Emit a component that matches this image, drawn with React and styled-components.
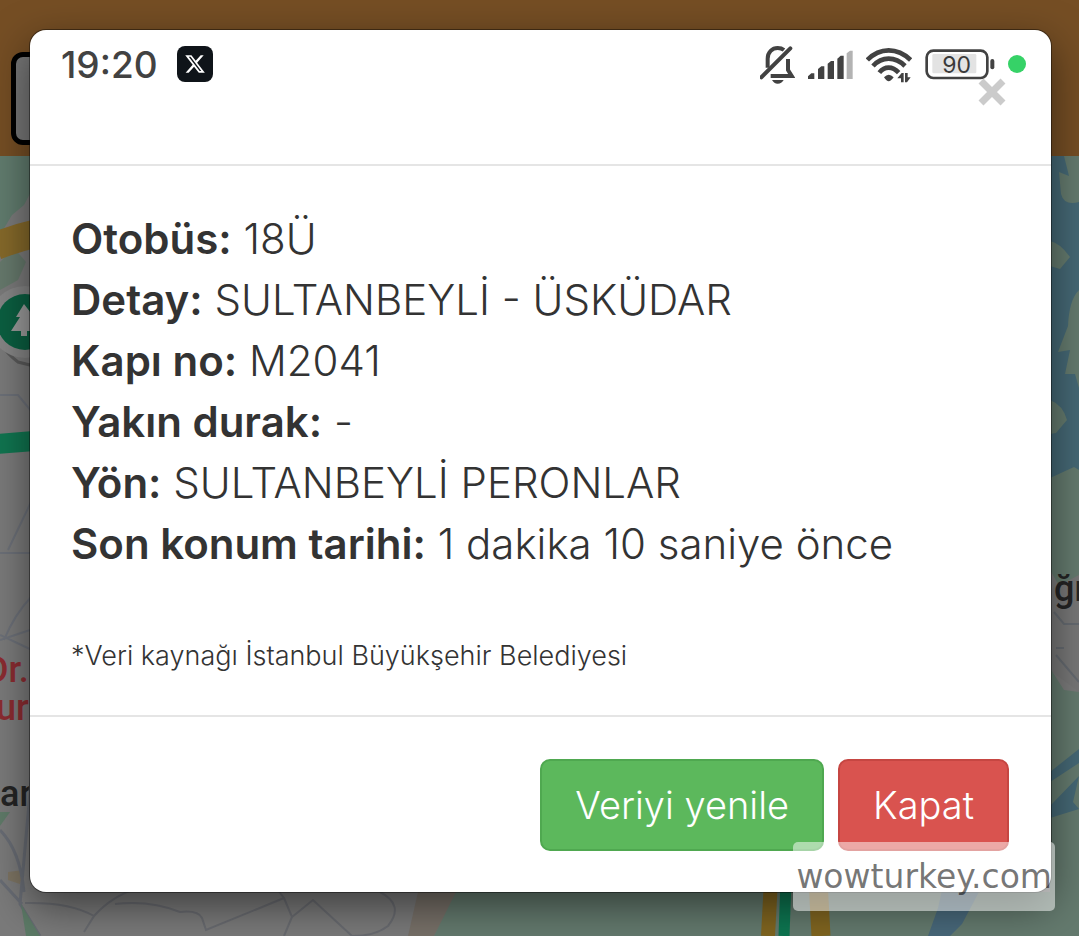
import React from 'react';
import styled, { createGlobalStyle } from 'styled-components';

const details = [
  { label: 'Otobüs', value: '18Ü' },
  { label: 'Detay', value: 'SULTANBEYLİ - ÜSKÜDAR' },
  { label: 'Kapı no', value: 'M2041' },
  { label: 'Yakın durak', value: '-' },
  { label: 'Yön', value: 'SULTANBEYLİ PERONLAR' },
  { label: 'Son konum tarihi', value: '1 dakika 10 saniye önce' },
];

export default function App() {
  return (
    <Page>
      <GlobalStyle />
      <Scene aria-hidden="true">
        <TopBar>
          <MenuBox>-</MenuBox>
        </TopBar>
        <CityMap />
      </Scene>
      <Dialog role="dialog" aria-modal="true" aria-label="Otobüs bilgisi">
        <Header>
          <StatusBar>
            <Clock>19:20</Clock>
            <XBadge />
            <StatusIcons>
              <MutedBell />
              <Signal />
              <Wifi />
              <Battery />
              <Dot />
            </StatusIcons>
          </StatusBar>
          <CloseButton type="button" aria-label="Kapat">
            <svg width="28" height="28" viewBox="0 0 28 28">
              <path d="M3 3L25 25M25 3L3 25" stroke="#cbcbcb" strokeWidth="7" />
            </svg>
          </CloseButton>
        </Header>
        <Body>
          {details.map(({ label, value }) => (
            <Detail key={label}>
              <b>{label}:</b> {value}
            </Detail>
          ))}
          <Source>*Veri kaynağı İstanbul Büyükşehir Belediyesi</Source>
        </Body>
        <Footer>
          <Button type="button" $color="#5cb85c" $edge="#4fa850">Veriyi yenile</Button>
          <Button type="button" $color="#d9534f" $edge="#c64642">Kapat</Button>
        </Footer>
      </Dialog>
      <Watermark>wowturkey.com</Watermark>
    </Page>
  );
}

function XBadge() {
  return (
    <Badge>
      <svg width="20" height="20" viewBox="1 2 22 20" fill="#fff">
        <path d="M18.244 2.25h3.308l-7.227 8.26 8.502 11.24H16.17l-5.214-6.817L4.99 21.75H1.68l7.73-8.835L1.254 2.25H8.08l4.713 6.231zm-1.161 17.52h1.833L7.084 4.126H5.117z" />
      </svg>
    </Badge>
  );
}

function MutedBell() {
  return (
    <svg width="35" height="39" viewBox="60 74 105 117" fill="none" stroke="#424242" strokeWidth="12">
      <path d="M83 142V115C83 95 97 83 113 83C121 83 127 85 132 89" />
      <path d="M64 171L151 84" strokeLinecap="round" />
      <path d="M92 167H155L144 149V116" />
      <path d="M96 179H131Q125 190 113 190Q102 190 96 179Z" fill="#424242" stroke="none" />
    </svg>
  );
}

function Signal() {
  return (
    <svg width="45" height="39" viewBox="203 74 135 117" fill="#424242">
      <path d="M203 176V168L213 159H222V176Z" />
      <path d="M233 176V146L243 138H252V176Z" />
      <path d="M262 176V130L272 122H281V176Z" />
      <path d="M291 176V115L301 106H310V176Z" />
      <path d="M319 176V99L329 91H337V176Z" fill="#b3b3b3" />
    </svg>
  );
}

function Wifi() {
  return (
    <svg width="46" height="39" viewBox="375 74 138 117" fill="none" stroke="#424242" strokeWidth="14">
      <path d="M379 119Q407 90 443 90T509 119" />
      <path d="M396 137Q416 115 443 115T492 137" />
      <path d="M415 157Q427 142 443 142T473 157" />
      <path d="M429 171Q443 155 458 171Q449 183 443 183T429 171Z" fill="#424242" stroke="none" />
      <path d="M469 174L482 158H488V186H480V174Z" fill="#424242" stroke="none" />
      <path d="M509 171L498 186H492V158H500V171Z" fill="#424242" stroke="none" />
    </svg>
  );
}

function Battery() {
  return (
    <svg width="70" height="39" viewBox="557 74 210 117">
      <rect x="562" y="91" width="182" height="82" rx="20" fill="#fff" stroke="#424242" strokeWidth="8" />
      <rect x="579" y="101" width="132" height="58" rx="4" fill="#e3e3e3" />
      <rect x="753" y="116" width="12" height="31" rx="6" fill="#424242" />
      <text x="652" y="158" textAnchor="middle" fontSize="69" fontWeight="400" fill="#3a3a3a">90</text>
    </svg>
  );
}

function CityMap() {
  return (
    <MapSvg viewBox="0 156 1079 780" preserveAspectRatio="xMidYMid slice">
      <rect y="156" width="1079" height="780" fill="#7a7a7a" />

      <path d="M0 156H32V190L24 205L12 215L0 235Z" fill="#617c6e" />
      <path d="M0 262L14 248L26 262L18 280L0 290Z" fill="#66796c" />
      <path d="M-4 246Q16 238 34 234" stroke="#85692a" strokeWidth="28" fill="none" />
      <path d="M-4 334Q2 350 18 362L34 366" stroke="#5a5a5a" strokeWidth="3" fill="none" />
      <circle cx="25" cy="322" r="36" fill="#858585" />
      <circle cx="25" cy="322" r="28" fill="#0b5f41" />
      <path d="M24 304L16 317H20L11 331H21V336H27V331H38L30 317H34Z" fill="#9a9a9a" />
      <path d="M-2 444L34 441" stroke="#107550" strokeWidth="20" fill="none" />
      <path d="M0 395H18L32 412M8 550L32 500M0 553L30 553M0 640L30 630M4 640Q14 615 32 596M0 635L32 650" stroke="#6c7078" strokeWidth="2" fill="none" />
      <MapLabel x="-15" y="682" fill="#8b2c31">Dr.</MapLabel>
      <MapLabel x="-4" y="720" fill="#8b2c31">ur</MapLabel>
      <MapLabel x="0" y="806" fill="#242424">ar</MapLabel>
      <path d="M0 812H10L0 826Z" fill="#5f7a68" />
      <path d="M8 872L24 870L20 884L8 880Z" fill="#7c7362" />
      <path d="M0 830Q20 850 24 892M0 880L22 904M32 770L20 904L40 936" stroke="#686c74" strokeWidth="3" fill="none" />
      <path d="M21 904L40 936H26Z" fill="#5c7a66" />

      <path d="M25 903Q70 902 94 916L84 932M94 916Q112 896 138 888M115 904Q150 900 180 912Q198 910 202 918L206 930L284 898L270 880M284 898L292 917L284 936M292 917L313 900L352 936M380 892Q405 905 388 926Q375 936 352 936" stroke="#696b70" strokeWidth="2" fill="none" />
      <path d="M418 892L408 936H434L458 892Z" fill="#777068" />
      <path d="M456 892L434 936H1079V700H1050V892Z" fill="#647a6e" />

      <path d="M771 880L768 936" stroke="#806520" strokeWidth="14" fill="none" />
      <path d="M786 880L784 936" stroke="#0d7651" strokeWidth="11" fill="none" />
      <path d="M818 880L821 936" stroke="#806520" strokeWidth="19" fill="none" />
      <path d="M942 890H980L962 924L950 936H928L938 908Z" fill="#48687a" />

      <rect x="1050" y="156" width="29" height="330" fill="#456875" />
      <path d="M1064 156H1079V202Q1064 206 1061 194L1059 172L1069 176Z" fill="#647a6e" />
      <path d="M1050 241Q1060 243 1070 257L1060 269L1050 266Z" fill="#647a6e" />
      <path d="M1079 290Q1069 300 1068 326L1058 352L1070 350L1065 374L1075 374L1079 388Z" fill="#647a6e" />
      <path d="M1050 400Q1063 405 1067 420L1056 433L1050 434Z" fill="#647a6e" />
      <path d="M1050 478L1074 467L1079 470V620L1050 570Z" fill="#647a6e" />
      <path d="M1050 590L1079 575V692L1050 670Z" fill="#777" />
      <path d="M1050 668L1064 690L1079 692V936H1050Z" fill="#647a6e" />
      <path d="M1054 612L1064 624H1079M1056 648H1064M1056 655L1079 682" stroke="#656a70" strokeWidth="2" fill="none" />
      <path d="M1050 772L1079 749V763L1050 782Z" fill="#456875" />
      <path d="M1050 806L1079 776L1073 802L1079 809L1050 818Z" fill="#456875" />
      <MapLabel x="1054" y="601" fill="#242424">ğr</MapLabel>
    </MapSvg>
  );
}

const fontStack = 'Inter, "Noto Sans", sans-serif';

const GlobalStyle = createGlobalStyle`
  * {
    box-sizing: border-box;
  }
  body {
    margin: 0;
    font-family: ${fontStack};
    color: #333;
  }
`;

const Page = styled.div`
  position: relative;
  min-height: 100vh;
  padding: 30px 28px 44px 30px;
  overflow: hidden;
`;

// everything behind the dialog, already dimmed
const Scene = styled.div`
  position: absolute;
  inset: 0;
  display: flex;
  flex-direction: column;
`;

const TopBar = styled.div`
  flex: none;
  height: 156px;
  padding: 52px 11px 10px;
  background: #754e24;
`;

const MenuBox = styled.div`
  width: 94px;
  height: 93px;
  padding: 10px 12px;
  border: 5px solid #000;
  border-radius: 12px;
  background: #777;
  color: #000;
  font-size: 42px;
`;

const MapSvg = styled.svg`
  flex: 1;
  width: 100%;
  min-height: 0;
`;

const MapLabel = styled.text`
  font: 500 36px Roboto, sans-serif;
`;

const Dialog = styled.div`
  position: relative;
  background: #fff;
  border-radius: 16px;
  box-shadow: 0 0 0 1px rgba(0, 0, 0, 0.4), 0 14px 41px rgba(0, 0, 0, 0.5);
`;

const Header = styled.div`
  height: 136px;
  padding: 14px 25px 0 31px;
  border-bottom: 2px solid #e5e5e5;
`;

const StatusBar = styled.div`
  display: flex;
  align-items: center;
  height: 40px;
`;

const Clock = styled.span`
  margin-right: 19px;
  font-size: 37px;
  font-weight: 450;
  color: #424242;
`;

const Badge = styled.span`
  display: flex;
  align-items: center;
  justify-content: center;
  width: 36px;
  height: 36px;
  border-radius: 8px;
  background: #0f1419;
`;

const StatusIcons = styled.div`
  display: flex;
  align-items: center;
  gap: 13px;
  margin-left: auto;
`;

const Dot = styled.span`
  width: 18px;
  height: 18px;
  border-radius: 50%;
  background: #36d267;
`;

const CloseButton = styled.button`
  display: block;
  margin: -6px 20px 0 auto;
  padding: 0;
  border: 0;
  background: none;
  line-height: 0;
  cursor: pointer;
`;

const Body = styled.div`
  padding: 42px 41px 39px;
`;

const Detail = styled.div`
  font-size: 42px;
  font-weight: 350;
  line-height: 61px;

  b {
    font-weight: 600;
  }
`;

const Source = styled.small`
  display: block;
  margin-top: 61px;
  font-size: 27px;
  font-weight: 350;
  line-height: 41px;
`;

const Footer = styled.div`
  display: flex;
  justify-content: flex-end;
  gap: 14px;
  padding: 42px 42px 41px;
  border-top: 2px solid #e5e5e5;
`;

const Button = styled.button`
  height: 92px;
  padding: 0 33px;
  border: 2px solid ${p => p.$edge};
  border-radius: 10px;
  background: ${p => p.$color};
  color: #fff;
  font-family: ${fontStack};
  font-size: 38px;
  font-weight: 350;
  cursor: pointer;
`;

const Watermark = styled.div`
  position: absolute;
  right: 24px;
  bottom: 25px;
  padding: 0 3px;
  border-radius: 5px;
  background: rgba(255, 255, 255, 0.5);
  color: rgba(0, 0, 0, 0.55);
  font-family: "DejaVu Sans", sans-serif;
  font-size: 33px;
  line-height: 69px;
`;
